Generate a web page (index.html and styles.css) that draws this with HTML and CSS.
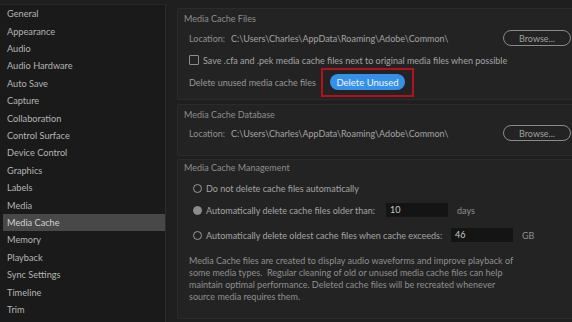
FILE: index.html
```html
<!DOCTYPE html>
<html>
<head>
<meta charset="utf-8">
<link rel="stylesheet" href="styles.css">
</head>
<body>
<div class="app">
  <nav class="sidebar">
    <div class="item">General</div>
    <div class="item">Appearance</div>
    <div class="item">Audio</div>
    <div class="item">Audio Hardware</div>
    <div class="item">Auto Save</div>
    <div class="item">Capture</div>
    <div class="item">Collaboration</div>
    <div class="item">Control Surface</div>
    <div class="item">Device Control</div>
    <div class="item">Graphics</div>
    <div class="item">Labels</div>
    <div class="item">Media</div>
    <div class="item selected">Media Cache</div>
    <div class="item">Memory</div>
    <div class="item">Playback</div>
    <div class="item">Sync Settings</div>
    <div class="item">Timeline</div>
    <div class="item">Trim</div>
  </nav>
  <main class="content">
    <section class="group g1">
      <div class="group-title">Media Cache Files</div>
      <div class="row loc-row">
        <span class="loc-label">Location:</span>
        <span class="path">C:\Users\Charles\AppData\Roaming\Adobe\Common\</span>
        <button class="browse">Browse...</button>
      </div>
      <div class="row check-row">
        <span class="checkbox"></span>
        <span>Save .cfa and .pek media cache files next to original media files when possible</span>
      </div>
      <div class="row delete-row">
        <span class="delete-label">Delete unused media cache files</span>
        <span class="highlight"><button class="primary">Delete Unused</button></span>
      </div>
    </section>
    <section class="group g2">
      <div class="group-title">Media Cache Database</div>
      <div class="row loc-row">
        <span class="loc-label">Location:</span>
        <span class="path">C:\Users\Charles\AppData\Roaming\Adobe\Common\</span>
        <button class="browse">Browse...</button>
      </div>
    </section>
    <section class="group g3">
      <div class="group-title">Media Cache Management</div>
      <div class="row radio-row r1">
        <span class="radio"></span>
        <span>Do not delete cache files automatically</span>
      </div>
      <div class="row radio-row r2">
        <span class="radio filled"></span>
        <span class="opt-label older">Automatically delete cache files older than:</span>
        <span class="field">10</span>
        <span class="unit">days</span>
      </div>
      <div class="row radio-row r3">
        <span class="radio"></span>
        <span class="opt-label exceeds">Automatically delete oldest cache files when cache exceeds:</span>
        <span class="field">46</span>
        <span class="unit">GB</span>
      </div>
      <p class="note">Media Cache files are created to display audio waveforms and improve playback of<br>some media types.&nbsp; Regular cleaning of old or unused media cache files can help<br>maintain optimal performance. Deleted cache files will be recreated whenever<br>source media requires them.</p>
    </section>
  </main>
</div>
</body>
</html>
```
FILE: styles.css
```css
html, body {
  margin: 0;
  padding: 0;
}
body {
  width: 572px;
  height: 322px;
  overflow: hidden;
  background: #1f1f1f;
  font-family: Lato, "Open Sans", sans-serif;
  font-size: 9px;
  color: #a3a3a3;
}
.app {
  display: flex;
  height: 322px;
}
.sidebar {
  width: 166px;
  flex: none;
  box-sizing: border-box;
  margin-top: 4px;
  padding-top: 0.3px;
  background: #1a1a1a;
  border-right: 1px solid #2c2c2c;
  border-top: 1px solid #262626;
}
.item {
  height: 17.4px;
  line-height: 17.4px;
  padding-left: 7px;
  color: #b4b4b4;
  font-size: 9.2px;
  white-space: nowrap;
}
.item.selected {
  background: #484848;
  color: #d2d2d2;
  margin-left: 3px;
  padding-left: 4px;
}
.content {
  flex: 1;
  display: flex;
  flex-direction: column;
  padding: 8px 0 0 11px;
  min-width: 0;
}
.group {
  background: #232323;
  border: 1px solid #2b2b2b;
  border-right: none;
  border-radius: 2px 0 0 2px;
  padding: 3px 1px 0 6px;
}
.g1 { padding-bottom: 2px; }
.g2 { margin-top: 4px; padding-bottom: 14px; }
.g3 { margin-top: 3px; padding-top: 1px; flex: 1; margin-bottom: 3px; }
.group-title {
  height: 14px;
  line-height: 14px;
  color: #8e8e8e;
  white-space: nowrap;
}
.row {
  display: flex;
  align-items: center;
  margin-left: 5px;
  white-space: nowrap;
}
.loc-row {
  height: 16px;
  margin-top: 4px;
}
.g2 .loc-row { margin-top: 3px; }
.loc-label {
  width: 42px;
  color: #8f8f8f;
}
.path {
  color: #a3a3a3;
}
.browse {
  margin-left: auto;
  width: 68px;
  height: 16px;
  box-sizing: border-box;
  border: 1.5px solid #8a8a8a;
  border-radius: 8px;
  background: transparent;
  color: #a0a0a0;
  font: inherit;
  padding: 0;
}
.check-row {
  height: 14px;
  margin-top: 7px;
}
.checkbox {
  width: 10px;
  height: 10px;
  box-sizing: border-box;
  border: 1.5px solid #8c8c8c;
  border-radius: 1px;
  margin-right: 4px;
}
.delete-row {
  height: 29px;
  margin-top: 1px;
}
.delete-label {
  width: 132px;
  color: #999;
}
.highlight {
  display: inline-flex;
  box-sizing: border-box;
  height: 29px;
  border: 2px solid #b5111d;
  padding: 4px 7px 5px 7px;
}
.primary {
  width: 75px;
  height: 16px;
  border: none;
  border-radius: 8px;
  background: #3590e8;
  color: #f2f6fb;
  font: inherit;
  font-size: 9.5px;
  padding: 0;
}
.radio-row {
  height: 14px;
  margin-left: 9px;
}
.r1 { margin-top: 6px; }
.r2 { margin-top: 8px; }
.r3 { margin-top: 11px; }
.radio {
  width: 9px;
  height: 9px;
  box-sizing: border-box;
  border: 1.5px solid #9a9a9a;
  border-radius: 50%;
  margin-right: 4px;
}
.radio.filled {
  background: #8c8c8c;
  border-color: #8c8c8c;
}
.opt-label.older { width: 180px; }
.opt-label.exceeds { width: 245px; }
.field {
  width: 62px;
  height: 14px;
  line-height: 14px;
  box-sizing: border-box;
  background: #141414;
  color: #c8c8c8;
  padding-left: 4px;
}
.unit {
  margin-left: 9px;
  color: #8f8f8f;
}
.note {
  margin: 13px 0 0 5px;
  line-height: 12px;
  color: #8f8f8f;
  white-space: nowrap;
}
```
